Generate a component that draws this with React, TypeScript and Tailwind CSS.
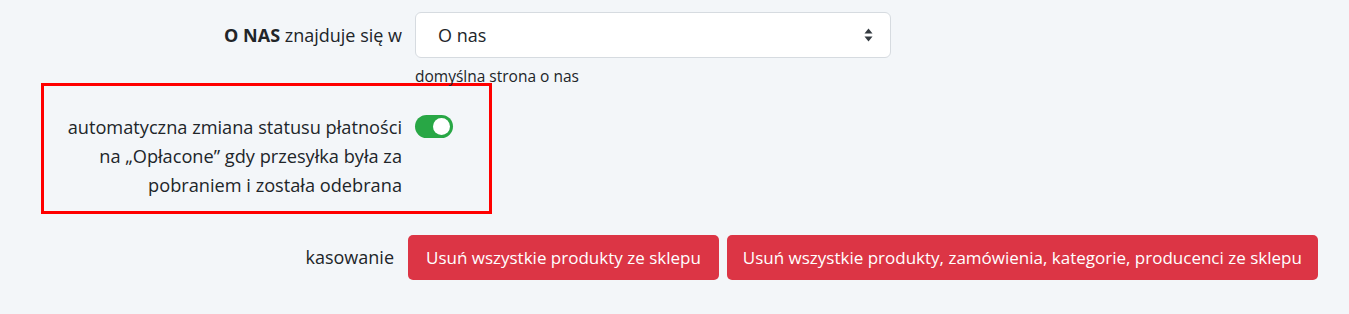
import { useState } from "react";

const font = { fontFamily: "'Open Sans', Lato, sans-serif" };

function Toggle({ on, onChange }: { on: boolean; onChange: (v: boolean) => void }) {
  return (
    <button
      type="button"
      onClick={() => onChange(!on)}
      className={`relative mt-[2px] h-[23px] w-[38px] shrink-0 rounded-full ${on ? "bg-[#28a745]" : "bg-gray-300"}`}
    >
      <span
        className={`absolute top-[3px] h-[17px] w-[17px] rounded-full bg-white ${on ? "left-[18px]" : "left-[3px]"}`}
      />
    </button>
  );
}

export default function App() {
  const [auto, setAuto] = useState(true);

  return (
    <div className="min-h-[314px] w-full bg-[#f3f6f9] text-[#212529]" style={font}>
      {/* O NAS */}
      <div className="flex pt-[12px]">
        <div className="flex h-[46px] w-[402px] items-center justify-end text-[18px]">
          <span>
            <b className="font-bold">O NAS</b> znajduje się w
          </span>
        </div>
        <div className="ml-[13px] w-[476px]">
          <div className="flex h-[46px] items-center justify-between rounded-[6px] border border-[#d6dbe0] bg-white pl-[22px] pr-[17px] text-[18px]">
            <span>O nas</span>
            <svg width="9" height="14" viewBox="0 0 9 14">
              <path d="M4.5 0.5 L8.5 5.5 H0.5 Z" fill="#343a40" />
              <path d="M4.5 13.5 L8.5 8.5 H0.5 Z" fill="#343a40" />
            </svg>
          </div>
          <div className="mt-[10px] h-[15px] text-[15.5px] leading-[16px]">domyślna strona o nas</div>
        </div>
      </div>

      {/* auto status */}
      <div className="ml-[41px] h-[131px] w-[451px] border-[3px] border-[#ff0000]">
        <div className="flex pt-[27px]">
          <div className="w-[358px] text-right text-[18.2px] leading-[29px]">
            automatyczna zmiana statusu płatności
            <br />
            na „Opłacone” gdy przesyłka była za
            <br />
            pobraniem i została odebrana
          </div>
          <div className="ml-[13px]">
            <Toggle on={auto} onChange={setAuto} />
          </div>
        </div>
      </div>

      {/* kasowanie */}
      <div className="mt-[21px] flex items-center">
        <div className="w-[394px] text-right text-[18px]">kasowanie</div>
        <div className="ml-[14px] flex gap-[8px]">
          <button className="h-[45px] rounded-[5px] bg-[#dc3545] px-[18px] text-[17px] text-white">
            Usuń wszystkie produkty ze sklepu
          </button>
          <button className="h-[45px] rounded-[5px] bg-[#dc3545] px-[16px] text-[17px] text-white">
            Usuń wszystkie produkty, zamówienia, kategorie, producenci ze sklepu
          </button>
        </div>
      </div>
    </div>
  );
}
